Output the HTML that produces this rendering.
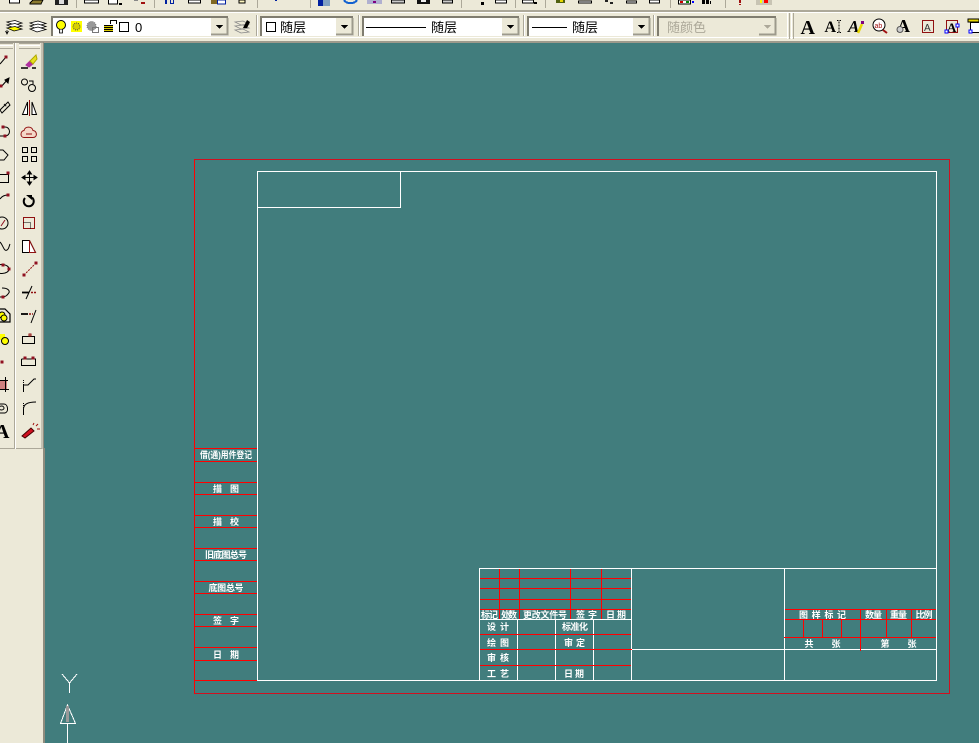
<!DOCTYPE html>
<html><head><meta charset="utf-8"><style>
html,body{margin:0;padding:0;width:979px;height:743px;overflow:hidden;background:#417d7d}
svg{display:block}
.c{font-family:"Liberation Sans","WenQuanYi Zen Hei","Noto Sans CJK SC",sans-serif;font-size:13px;fill:#000}
.t{font-family:"Liberation Sans","WenQuanYi Zen Hei","Noto Sans CJK SC",sans-serif;font-size:9px;font-weight:bold;fill:#fff;text-anchor:middle}
.s{font-family:"Liberation Serif",serif;font-weight:bold;fill:#000}
.w line,.w rect{stroke:#fff;fill:none}
.r line{stroke:#f00}
.r2 line{stroke:#d01020}
</style></head><body>
<svg width="979" height="743" viewBox="0 0 979 743" xmlns="http://www.w3.org/2000/svg">
<!-- chrome -->
<rect width="979" height="43" fill="#ece9d8"/>
<rect x="0" y="42" width="44" height="701" fill="#ece9d8"/>
<rect x="44" y="43" width="935" height="700" fill="#417d7d"/>
<g shape-rendering="crispEdges">
<rect y="10" width="979" height="2" fill="#aca899"/><rect y="12" width="979" height="1" fill="#fff"/>
<rect y="37" width="979" height="1" fill="#fff"/><rect y="41" width="979" height="2" fill="#9d9a8c"/>
<rect x="43" y="42" width="1" height="701" fill="#8e8c7e"/>
<rect x="44" y="448" width="1" height="295" fill="#8e8c7e"/>
<rect x="41" y="43" width="2" height="406" fill="#c4c1b2"/>
<rect x="14" y="43" width="1" height="406" fill="#aca899"/>
<rect x="15" y="43" width="1" height="406" fill="#fff"/>
<rect x="0" y="448" width="14" height="1" fill="#aca899"/>
<rect x="16" y="448" width="26" height="1" fill="#aca899"/>
<!-- grips -->
<rect x="0" y="43" width="13" height="1" fill="#aca899"/><rect x="0" y="45" width="13" height="1" fill="#fff"/><rect x="0" y="48" width="13" height="1" fill="#aca899"/>
<rect x="19" y="43" width="21" height="1" fill="#aca899"/><rect x="19" y="45" width="21" height="1" fill="#fff"/><rect x="19" y="48" width="21" height="1" fill="#aca899"/>
<rect x="787" y="13" width="1" height="26" fill="#fff"/><rect x="789" y="13" width="1" height="26" fill="#aca899"/><rect x="791" y="13" width="1" height="26" fill="#fff"/><rect x="793" y="13" width="1" height="26" fill="#aca899"/>
<!-- separators top row -->
<g fill="#aca899"><rect x="76" width="1" height="8"/><rect x="154" width="1" height="8"/><rect x="257" width="1" height="8"/><rect x="310" width="1" height="8"/><rect x="461" width="1" height="8"/><rect x="515" width="1" height="8"/><rect x="545" width="1" height="8"/><rect x="670" width="1" height="8"/><rect x="725" width="1" height="8"/></g>
<!-- top row icons -->
<rect x="9.500" y="-2" width="10" height="5" fill="#fff" stroke="#000"/>
<polygon points="30,3 33,0 43,0 41,4 30,4" fill="#8a7a30" stroke="#000"/>
<rect x="55" y="0" width="13" height="5" fill="#222"/><rect x="59" y="0" width="5" height="4" fill="#ddd"/>
<rect x="84.500" y="0" width="14" height="3" fill="#fff" stroke="#000"/>
<rect x="108.500" y="-1" width="9" height="5" fill="#fff" stroke="#000"/><rect x="119" y="3" width="3" height="2" fill="#000"/>
<rect x="134" y="0" width="4" height="1" fill="#888"/><rect x="141" y="2" width="4" height="2" fill="#a01010"/>
<rect x="165" y="0" width="2" height="4" fill="#0020a0"/><rect x="170" y="0" width="4" height="4" fill="#0020a0"/><rect x="171" y="0" width="2" height="3" fill="#ece9d8"/>
<rect x="188.500" y="0" width="12" height="3" fill="#fff" stroke="#000"/>
<rect x="211" y="0" width="7" height="4" fill="#806820"/><rect x="217.500" y="0" width="8" height="4" fill="#fff" stroke="#0020a0"/>
<rect x="239" y="0" width="6" height="3" fill="#fff8c0" stroke="#000"/>
<rect x="275" y="0" width="2" height="1" fill="#0020a0"/>
<rect x="318" y="0" width="5" height="6" fill="#0020a0"/><rect x="323" y="0" width="7" height="6" fill="#80a0c0"/>
<path d="M344 0A7 5 0 0 0 357 0" fill="none" stroke="#1060d0" stroke-width="2"/>
<rect x="367" y="0" width="15" height="4" fill="#b0b0d0"/><rect x="373" y="1" width="3" height="2" fill="#800080"/>
<rect x="391.500" y="0" width="13" height="3" fill="#ccc" stroke="#000"/>
<rect x="417" y="0" width="13" height="4" fill="#111"/><rect x="421" y="0" width="5" height="2" fill="#eee"/>
<rect x="442.500" y="0" width="10" height="3" fill="#ccc" stroke="#000"/>
<rect x="481" y="2" width="3" height="3" fill="#000"/><rect x="495.500" y="0" width="11" height="3" fill="#fff" stroke="#000"/>
<rect x="522.500" y="0" width="11" height="3" fill="#fff" stroke="#000"/><rect x="534" y="2" width="3" height="2" fill="#000"/>
<rect x="556" y="0" width="9" height="3" fill="#506010"/><rect x="560" y="0" width="3" height="2" fill="#e8d800"/>
<rect x="578.500" y="1" width="13" height="2" fill="#fff" stroke="#000"/>
<rect x="605" y="0" width="3" height="2" fill="#222"/><rect x="610" y="2" width="3" height="2" fill="#222"/>
<rect x="626.500" y="1" width="10" height="2" fill="#fff" stroke="#000"/>
<rect x="649.500" y="0" width="10" height="3" fill="#fff" stroke="#000"/>
<rect x="678.500" y="0" width="12" height="4" fill="#fff" stroke="#000"/><rect x="680" y="1" width="3" height="2" fill="#c00"/><rect x="686" y="1" width="3" height="2" fill="#080"/><rect x="692" y="1" width="2" height="2" fill="#00f"/>
<rect x="702" y="0" width="3" height="4" fill="#000"/><rect x="706" y="0" width="3" height="4" fill="#000"/><rect x="710" y="1" width="1" height="3" fill="#000"/>
<rect x="739" y="0" width="2" height="3" fill="#a01010"/><rect x="739" y="4" width="2" height="1" fill="#a01010"/>
<rect x="756" y="0" width="16" height="5" fill="#c8c4b4"/><rect x="760" y="0" width="2" height="3" fill="#ff0"/><rect x="764" y="0" width="4" height="3" fill="#f00"/>
<!-- row 2 separators -->
<rect x="256" y="15" width="1" height="21" fill="#aca899"/><rect x="257" y="15" width="1" height="21" fill="#fff"/>
<rect x="358" y="15" width="1" height="21" fill="#aca899"/><rect x="359" y="15" width="1" height="21" fill="#fff"/>
<rect x="523" y="15" width="1" height="21" fill="#aca899"/><rect x="524" y="15" width="1" height="21" fill="#fff"/>
<rect x="653" y="15" width="1" height="21" fill="#aca899"/><rect x="654" y="15" width="1" height="21" fill="#fff"/>
<!-- combos -->
<g>
<rect x="51" y="16" width="177" height="20" fill="#fff"/><path d="M52 36V17H228" fill="none" stroke="#807d70" stroke-width="2"/><rect x="211" y="18" width="17" height="17" fill="#ece9d8"/><path d="M211 34.500H227.500V18" fill="none" stroke="#9d9a8c" stroke-width="2"/>
<rect x="260" y="16" width="93" height="20" fill="#fff"/><path d="M261 36V17H353" fill="none" stroke="#807d70" stroke-width="2"/><rect x="336" y="18" width="17" height="17" fill="#ece9d8"/><path d="M336 34.500H352.500V18" fill="none" stroke="#9d9a8c" stroke-width="2"/>
<rect x="362" y="16" width="157" height="20" fill="#fff"/><path d="M363 36V17H519" fill="none" stroke="#807d70" stroke-width="2"/><rect x="502" y="18" width="17" height="17" fill="#ece9d8"/><path d="M502 34.500H518.500V18" fill="none" stroke="#9d9a8c" stroke-width="2"/>
<rect x="527" y="16" width="123" height="20" fill="#fff"/><path d="M528 36V17H650" fill="none" stroke="#807d70" stroke-width="2"/><rect x="633" y="18" width="17" height="17" fill="#ece9d8"/><path d="M633 34.500H649.500V18" fill="none" stroke="#9d9a8c" stroke-width="2"/>
<rect x="657" y="16" width="119" height="20" fill="#ece9d8"/><path d="M658 36V17H776" fill="none" stroke="#807d70" stroke-width="2"/><rect x="759" y="18" width="17" height="17" fill="#ece9d8"/><path d="M759 34.500H775.500V18" fill="none" stroke="#9d9a8c" stroke-width="2"/>
</g>
<polygon points="216,25 223,25 219.500,29" fill="#000"/>
<polygon points="341,25 348,25 344.500,29" fill="#000"/>
<polygon points="507,25 514,25 510.500,29" fill="#000"/>
<polygon points="638,25 645,25 641.500,29" fill="#000"/>
<polygon points="764,25 771,25 767.500,29" fill="#aca899"/>
<!-- combo content -->
<rect x="119.500" y="22.500" width="9" height="9" fill="#fff" stroke="#000"/>
<rect x="266.500" y="22.500" width="9" height="9" fill="#fff" stroke="#000"/>
<rect x="366" y="27" width="60" height="1" fill="#000"/>
<rect x="532" y="27" width="35" height="1" fill="#000"/>
<!-- lock -->
<rect x="104" y="25" width="9" height="7" fill="#000"/><rect x="104" y="26" width="9" height="1" fill="#d8c800"/><rect x="104" y="28" width="9" height="1" fill="#d8c800"/><rect x="104" y="30" width="9" height="1" fill="#d8c800"/>
<path d="M110.500 24V20.500H116.500V24" fill="none" stroke="#000"/>
<!-- sun -->
<rect x="71" y="21" width="11" height="11" fill="#ff0"/>
</g>
<!-- bulb & sun -->
<circle cx="61" cy="25" r="4.500" fill="#ff0" stroke="#000"/><path d="M59.500 29.500V33H62.500V29.500" fill="#eee" stroke="#000" stroke-width=".8"/>
<circle cx="76.500" cy="26.500" r="3.500" fill="#d8d000" stroke="#444" stroke-dasharray="1 1"/>
<circle cx="91.500" cy="26" r="4.500" fill="#999" stroke="#777" stroke-dasharray="1 1"/><rect x="92.500" y="27.500" width="6" height="5" fill="none" stroke="#777"/>
<!-- layer icons -->
<g fill="#fff" stroke="#000" stroke-width=".8">
<path d="M7 22L15 20.500L22 23L14 25Z"/><path d="M7 25L15 23.500L22 26L14 28Z" fill="#fff"/><path d="M7 28L15 26.500L22 29L14 31Z" fill="#ff0"/>
<path d="M30 23L38 21L46 23.500L37 26Z"/><path d="M30 26L38 24L46 26.500L37 29Z"/><path d="M30 29L38 27L46 29.500L37 32Z"/>
<path d="M235 22L243 21L249 24L241 25Z" stroke="#888" fill="none"/><path d="M235 26L243 25L249 28L241 29Z" stroke="#888" fill="none"/><path d="M235 30L243 29L249 32L241 33Z" stroke="#888" fill="none"/>
</g>
<path d="M7 34V30M5.500 31L7 34L8.500 31" stroke="#000" fill="none" stroke-width=".8"/>
<path d="M243 28L247 20L250 22L247 28Z" fill="#000"/>
<!-- combo text -->
<text class="c" x="135" y="32">0</text>
<text class="c" x="280" y="32">随层</text>
<text class="c" x="431" y="32">随层</text>
<text class="c" x="572" y="32">随层</text>
<text class="c" x="667" y="32" style="fill:#aca899">随颜色</text>
<!-- text toolbar icons -->
<text class="s" x="800.500" y="34" font-size="20">A</text>
<text class="s" x="824.500" y="32" font-size="16">A</text><path d="M837 20.500H841M839 20.500V32.500M837 32.500H841" stroke="#000" fill="none" stroke-dasharray="1 .5"/>
<text class="s" x="848" y="32" font-size="17" font-style="italic">A</text><path d="M858 33L862 24" stroke="#e8d800" stroke-width="2.500"/><rect x="861" y="21" width="3" height="3" fill="#800080"/>
<circle cx="879" cy="25" r="6" fill="#fff" stroke="#000"/><text x="874.500" y="28" font-size="7" fill="#a01010" font-family="Liberation Sans">ab</text><path d="M883 30L887 33" stroke="#a01010" stroke-width="2"/>
<text class="s" x="897" y="32" font-size="18">A</text><circle cx="900" cy="29.500" r="3" fill="#ccc" stroke="#555"/>
<rect x="922.500" y="20.500" width="11" height="12" fill="none" stroke="#901010"/><text x="924" y="31" font-size="10" fill="#333" font-family="Liberation Sans">A</text>
<rect x="946.500" y="20.500" width="11" height="12" fill="none" stroke="#901010"/><text class="s" x="947" y="32" font-size="13">A</text><rect x="945" y="30" width="3" height="3" fill="#fff" stroke="#00f"/><rect x="956" y="24" width="3" height="3" fill="#fff" stroke="#00f"/>
<rect x="968" y="19" width="11" height="3" fill="#e8d800" stroke="#000"/><rect x="970.500" y="22.500" width="9" height="10" fill="#fff" stroke="#000"/><rect x="969" y="30" width="3" height="3" fill="#fff" stroke="#00f"/>
<!-- left toolbar 1 (clipped) -->
<g fill="none" stroke="#000" stroke-width="1">
<path d="M0 64L6 57"/><rect x="5" y="56" width="2" height="2" fill="#901020" stroke="#901020"/>
<path d="M1 87L8 79"/><path d="M5 80L9 78L8 83Z" fill="#000"/><rect x="0" y="85" width="2" height="2" fill="#901020" stroke="#901020"/>
<path d="M0 110L8 102L10 105L2 113Z"/><path d="M4 104L7 107" stroke-dasharray="1 1"/>
<path d="M2 127H5C11 127 11 136 5 136H0"/><rect x="2" y="126" width="2" height="2" fill="#901020" stroke="#901020"/><rect x="4" y="135" width="2" height="2" fill="#901020" stroke="#901020"/>
<path d="M0 150H3L8 155L4 160H0"/>
<path d="M0 174.500H8.500V182.500H0"/><rect x="7" y="172" width="2" height="2" fill="#901020" stroke="#901020"/>
<path d="M0 199C2 196 5 195 8 195"/><rect x="7" y="194" width="2" height="2" fill="#901020" stroke="#901020"/>
<circle cx="2" cy="223" r="6"/><path d="M1 226L5 220" stroke="#901020"/>
<path d="M0 242C3 245 4 252 7 250C9 249 9 246 10 244"/>
<ellipse cx="2" cy="269" rx="7" ry="4.500"/><rect x="2" y="264" width="2" height="2" fill="#901020" stroke="#901020"/><rect x="8" y="268" width="2" height="2" fill="#901020" stroke="#901020"/>
<path d="M2 288C8 288 11 291 8 294C6 297 3 297 0 297"/><rect x="2" y="296" width="2" height="2" fill="#901020" stroke="#901020"/>
<path d="M0 309H5L10 314V322H0" stroke-width="1.200"/><circle cx="2" cy="315" r="3" fill="#ff0"/><circle cx="4" cy="318" r="3" fill="#ff0"/>
<rect x="0" y="334" width="5" height="6" fill="#ff0" stroke="none"/><circle cx="5" cy="341" r="3.500" fill="#ff0"/>
<rect x="1" y="361" width="2" height="2" fill="#901020" stroke="#901020"/>
<rect x="0" y="380" width="7" height="10" fill="#d08080" stroke="none"/><path d="M0 380.500H8M5.500 377V392M0 389.500H9" stroke-width="1"/>
<path d="M0 404H4C8 404 9 412 5 413H0"/><ellipse cx="1.500" cy="408" rx="2.500" ry="2"/>
</g>
<text class="s" x="-5" y="438" font-size="20">A</text>
<!-- left toolbar 2 -->
<g fill="none" stroke="#000" stroke-width="1">
<path d="M26 65L30 61L33 64L29 67Z" fill="#b030a0" stroke="#b030a0"/><path d="M30 61L36 55L37 59L33 64Z" fill="#e8e020" stroke="#b0a800"/><path d="M21 68H28M32 68H36" stroke-width="1.500"/>
<circle cx="24.500" cy="82" r="3"/><circle cx="32" cy="88" r="3.500"/><path d="M29 81H33V84"/>
<path d="M22.500 114.500L27.500 102V114.500Z" fill="#fff"/><path d="M32 102L36.500 114.500H32Z" fill="#fff"/><path d="M29.500 100V116" stroke="#901010"/>
<path d="M24 137.500C20 137.500 20 131 24 130.500C25 126 32 126 33 130.500C37 130.500 38 137.500 33 137.500Z" stroke="#901010" fill="#f4d8c8"/><path d="M26 134H32" stroke="#901010"/>
<rect x="22.500" y="147.500" width="5" height="5" stroke-width="1"/><rect x="31.500" y="147.500" width="5" height="5" stroke-width="1"/><rect x="22.500" y="156.500" width="5" height="5" stroke-width="1"/><rect x="31.500" y="156.500" width="5" height="5" stroke-width="1"/>
<path d="M24 177.500H35M29.500 172V183" stroke-width="1"/><path d="M22 177.500L25 175.500V179.500ZM37 177.500L34 175.500V179.500ZM29.500 171L27.500 174H31.500ZM29.500 185L27.500 182H31.500Z" fill="#000"/>
<path d="M32 197.500A5 5 0 1 1 25 198" stroke-width="2"/><path d="M26 195H32V200Z" fill="#000" stroke="none"/>
<rect x="23.500" y="217.500" width="11" height="11" stroke="#901010"/><path d="M23.500 222.500H30.500V228.500" stroke-dasharray="1 1"/>
<path d="M22.500 240.500H29.500L35.500 252.500H22.500Z" fill="#fff"/><path d="M29.500 240.500L35.500 252.500H29.500Z" stroke="#901010"/>
<path d="M24 275L35 264" stroke="#901010" stroke-dasharray="2 1"/><rect x="23" y="274" width="2" height="2" fill="#901020" stroke="#901020"/><rect x="35" y="262" width="2" height="2" fill="#901020" stroke="#901020"/>
<path d="M22 292.500H29" stroke-width="1.800"/><path d="M26 299L32 286"/><path d="M31 292.500H37" stroke="#901010" stroke-dasharray="2 1" stroke-width="1.500"/>
<path d="M21 314H28" stroke-width="1.800"/><path d="M29 314H33" stroke="#901010" stroke-width="1.500" stroke-dasharray="2 1"/><path d="M31 323L36 310"/>
<rect x="22.500" y="336.500" width="12" height="7"/><rect x="29" y="334" width="2" height="2" stroke="#901010"/>
<path d="M21.500 359V365.500H35.500V359H21.500"/><rect x="24" y="357" width="2" height="2" fill="#901020" stroke="#901020"/><rect x="32" y="357" width="2" height="2" fill="#901020" stroke="#901020"/>
<path d="M23.500 391V380" stroke-dasharray="1 1"/><path d="M23.500 392V385H28L34 379H36"/>
<path d="M23.500 414V403" stroke-dasharray="1 1"/><path d="M23.500 415V409C23.500 404 28 402 36 402"/>
</g>
<path d="M22 436L31 428L34 431L25 438Z" fill="#d01020" stroke="#400" stroke-width="1"/>
<path d="M33 425L34 423M36 426L38 424M37 429L40 429" stroke="#a01010" stroke-width="1"/>
<!-- drawing -->
<g shape-rendering="crispEdges" stroke-width="1">
<g class="r2">
<line x1="194" y1="159.500" x2="950" y2="159.500"/><line x1="949.500" y1="159" x2="949.500" y2="694"/><line x1="194" y1="693.500" x2="950" y2="693.500"/>
</g>
<g class="w">
<rect x="257.500" y="171.500" width="679" height="509"/>
<rect x="257.500" y="171.500" width="143" height="36"/>
<line x1="631.500" y1="568" x2="631.500" y2="681"/>
<line x1="784.500" y1="568" x2="784.500" y2="681"/>
<line x1="479.500" y1="568.500" x2="937" y2="568.500"/>
<line x1="632" y1="649.500" x2="937" y2="649.500"/>
<line x1="479.500" y1="568" x2="479.500" y2="681"/>
<line x1="479" y1="619.500" x2="632" y2="619.500"/>
<line x1="517.500" y1="619" x2="517.500" y2="681"/>
<line x1="555.500" y1="619" x2="555.500" y2="681"/>
<line x1="593.500" y1="619" x2="593.500" y2="681"/>
</g>
<g class="r">
<line x1="194.500" y1="159" x2="194.500" y2="694"/>
<line x1="195" y1="448.500" x2="257" y2="448.500"/><line x1="195" y1="461.500" x2="257" y2="461.500"/>
<line x1="195" y1="482.500" x2="257" y2="482.500"/><line x1="195" y1="494.500" x2="257" y2="494.500"/>
<line x1="195" y1="515.500" x2="257" y2="515.500"/><line x1="195" y1="527.500" x2="257" y2="527.500"/>
<line x1="195" y1="548.500" x2="257" y2="548.500"/><line x1="195" y1="560.500" x2="257" y2="560.500"/>
<line x1="195" y1="581.500" x2="257" y2="581.500"/><line x1="195" y1="593.500" x2="257" y2="593.500"/>
<line x1="195" y1="614.500" x2="257" y2="614.500"/><line x1="195" y1="626.500" x2="257" y2="626.500"/>
<line x1="195" y1="647.500" x2="257" y2="647.500"/><line x1="195" y1="660.500" x2="257" y2="660.500"/>
<line x1="195" y1="680.500" x2="257" y2="680.500"/>
<line x1="480" y1="578.500" x2="631" y2="578.500"/><line x1="480" y1="588.500" x2="631" y2="588.500"/>
<line x1="480" y1="599.500" x2="631" y2="599.500"/><line x1="480" y1="609.500" x2="631" y2="609.500"/>
<line x1="499.500" y1="569" x2="499.500" y2="619"/><line x1="519.500" y1="569" x2="519.500" y2="619"/>
<line x1="570.500" y1="569" x2="570.500" y2="619"/><line x1="601.500" y1="569" x2="601.500" y2="619"/>
<line x1="480" y1="634.500" x2="631" y2="634.500"/><line x1="480" y1="649.500" x2="632" y2="649.500"/><line x1="480" y1="665.500" x2="631" y2="665.500"/>
<line x1="785" y1="609.500" x2="936" y2="609.500"/><line x1="785" y1="619.500" x2="936" y2="619.500"/><line x1="784" y1="637.500" x2="936" y2="637.500"/>
<line x1="860.500" y1="609" x2="860.500" y2="651"/><line x1="886.500" y1="609" x2="886.500" y2="638"/><line x1="911.500" y1="609" x2="911.500" y2="638"/>
<line x1="803.500" y1="619" x2="803.500" y2="638"/><line x1="822.500" y1="619" x2="822.500" y2="638"/><line x1="841.500" y1="619" x2="841.500" y2="638"/>
</g>
</g>
<!-- ucs -->
<g fill="none" stroke="#fff" stroke-width="1" shape-rendering="crispEdges">
<path d="M62 674L69.500 683L77 674M69.500 683V693"/>
<path d="M67.500 743V723M60.500 723.500H75.500L67.500 705Z"/>
</g>
<path d="M67.500 706V722" stroke="#999" stroke-width="3"/>
<!-- title text -->
<text class="t" x="226" y="458" textLength="52" lengthAdjust="spacingAndGlyphs">借(通)用件登记</text>
<text class="t" x="226" y="492" textLength="26">描 图</text>
<text class="t" x="226" y="525" textLength="26">描 校</text>
<text class="t" x="226" y="558" textLength="42">旧底图总号</text>
<text class="t" x="226" y="591" textLength="35">底图总号</text>
<text class="t" x="226" y="624" textLength="26">签 字</text>
<text class="t" x="226" y="658" textLength="26">日 期</text>
<text class="t" x="489.500" y="618" textLength="17">标记</text>
<text class="t" x="509" y="618" textLength="16">处数</text>
<text class="t" x="545" y="618" textLength="44">更改文件号</text>
<text class="t" x="586.500" y="618" textLength="21">签 字</text>
<text class="t" x="616" y="618" textLength="20">日 期</text>
<text class="t" x="498" y="630" textLength="22">设 计</text>
<text class="t" x="575" y="630" textLength="26">标准化</text>
<text class="t" x="498" y="646" textLength="22">绘 图</text>
<text class="t" x="574.500" y="646" textLength="21">审 定</text>
<text class="t" x="498" y="661" textLength="22">审 核</text>
<text class="t" x="498" y="677" textLength="22">工 艺</text>
<text class="t" x="574" y="677" textLength="20">日 期</text>
<text class="t" x="822.500" y="618" textLength="47">图 样 标 记</text>
<text class="t" x="873.500" y="618" textLength="17">数量</text>
<text class="t" x="898.500" y="618" textLength="17">重量</text>
<text class="t" x="924" y="618" textLength="17">比例</text>
<text class="t" x="809" y="647">共</text><text class="t" x="836" y="647">张</text>
<text class="t" x="885" y="647">第</text><text class="t" x="912" y="647">张</text>
</svg>
</body></html>
